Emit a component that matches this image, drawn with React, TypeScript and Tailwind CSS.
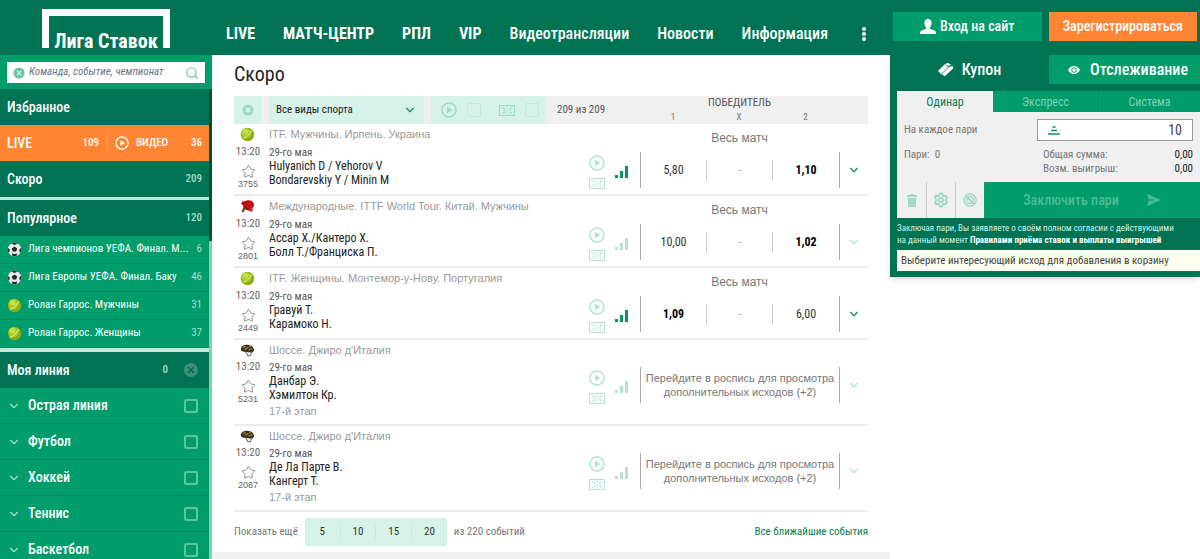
import type { ReactNode } from 'react'
import { ChevronDown, Search, Settings, Star, X } from 'lucide-react'

interface Match {
  id: number
  sport: 'tennis' | 'pingpong' | 'cycling'
  league: string
  players: string[]
  odds?: string[]
  favorite?: number
  stage?: string
  live?: boolean
}

const matches: Match[] = [
  {
    id: 3755,
    sport: 'tennis',
    league: 'ITF. Мужчины. Ирпень. Украина',
    players: ['Hulyanich D / Yehorov V', 'Bondarevskiy Y / Minin M'],
    odds: ['5,80', '-', '1,10'],
    favorite: 2,
    live: true,
  },
  {
    id: 2801,
    sport: 'pingpong',
    league: 'Международные. ITTF World Tour. Китай. Мужчины',
    players: ['Ассар Х./Кантеро Х.', 'Болл Т./Франциска П.'],
    odds: ['10,00', '-', '1,02'],
    favorite: 2,
  },
  {
    id: 2449,
    sport: 'tennis',
    league: 'ITF. Женщины. Монтемор-у-Нову. Португалия',
    players: ['Гравуй Т.', 'Карамоко Н.'],
    odds: ['1,09', '-', '6,00'],
    favorite: 0,
    live: true,
  },
  {
    id: 5231,
    sport: 'cycling',
    league: "Шоссе. Джиро д'Италия",
    players: ['Данбар Э.', 'Хэмилтон Кр.'],
    stage: '17-й этап',
  },
  {
    id: 2087,
    sport: 'cycling',
    league: "Шоссе. Джиро д'Италия",
    players: ['Де Ла Парте В.', 'Кангерт Т.'],
    stage: '17-й этап',
  },
]

const popular = [
  { title: 'Лига чемпионов УЕФА. Финал. М...', count: 6, ball: 'football' },
  { title: 'Лига Европы УЕФА. Финал. Баку', count: 46, ball: 'football' },
  { title: 'Ролан Гаррос. Мужчины', count: 31, ball: 'tennis' },
  { title: 'Ролан Гаррос. Женщины', count: 37, ball: 'tennis' },
]

const sports = ['Острая линия', 'Футбол', 'Хоккей', 'Теннис', 'Баскетбол']

function TennisBall() {
  return (
    <svg viewBox="0 0 16 16" className="size-[15px] shrink-0">
      <circle cx="8" cy="8" r="7.2" fill="#8aae12" />
      <circle cx="7" cy="6.500" r="5.500" fill="#a9cb25" />
      <circle cx="6" cy="5" r="3" fill="#c6e04e" />
      <path d="M3 12c3-.5 7.500-4 9.500-8.500" fill="none" stroke="#eef6b8" strokeWidth="1" />
    </svg>
  )
}

function Football() {
  return (
    <svg viewBox="0 0 16 16" className="size-[15px] shrink-0">
      <circle cx="8" cy="8" r="7.2" fill="#e9ecec" />
      <path
        d="M8 4.800l2.900 2.100-1.100 3.300H6.200L5.100 6.900zM4.500 1.700l3.500-.9 3.500.9L8 3.200zM1 6.500l1.800 1.300-.2 3L1.500 11A7 7 0 0 1 1 6.500zM15 6.500l-1.800 1.300.2 3 1.100.2a7 7 0 0 0 .5-4.500zM5.200 12.300l2.800.5 2.800-.5-.6 2.400a7 7 0 0 1-4.400 0z"
        fill="#232a28"
      />
    </svg>
  )
}

function Paddle() {
  return (
    <svg viewBox="0 0 16 16" className="size-[15px] shrink-0">
      <path d="M5 9.500l-2 3.500" stroke="#7c3a26" strokeWidth="2.400" strokeLinecap="round" />
      <ellipse cx="9" cy="6.200" rx="6" ry="5" fill="#c01218" />
      <path d="M4 8c2 3 6 4.500 8.500 3" stroke="#7d0c10" strokeWidth="1.500" fill="none" />
      <circle cx="11.500" cy="11.500" r="2.200" fill="#d8232a" />
      <circle cx="3.500" cy="4.500" r="2" fill="#b01015" />
    </svg>
  )
}

function Helmet() {
  return (
    <svg viewBox="0 0 16 16" className="size-[15px] shrink-0">
      <path d="M1 5.500C1.500 2.800 5 1.500 9 2c3.500.5 6 2.500 6 6l-2 2.500L3 9C1.500 8.500 1 7.500 1 5.500z" fill="#33301d" />
      <path d="M3 5l3-1.500M5 7l4-2.500M9 7.500l4-1.500M9.500 3.500l2 .8" stroke="#a98f2c" strokeWidth="1.200" />
      <path d="M6 9.500l2.500 4H11l1.500-4" fill="none" stroke="#777" strokeWidth="1.200" />
    </svg>
  )
}

function SportIcon({ sport }: { sport: Match['sport'] }) {
  if (sport === 'tennis') return <TennisBall />
  if (sport === 'pingpong') return <Paddle />
  return <Helmet />
}

function PlayCircle({ className }: { className: string }) {
  return (
    <svg viewBox="0 0 16 16" className={className}>
      <circle cx="8" cy="8" r="7" fill="none" stroke="currentColor" strokeWidth="1.500" />
      <path d="M6 4.800v6.400L11.400 8z" fill="currentColor" />
    </svg>
  )
}

function Scoreboard() {
  return (
    <svg viewBox="0 0 16 11" className="h-[11px] w-4" fill="none" stroke="currentColor">
      <rect x=".5" y=".5" width="15" height="10" />
      <path d="M2.500 3H5l1 1.200-1 1.300 1 1.200L5 8H2.500M13.500 3H11v5h2.500" />
      <path d="M8 1.500v8" strokeDasharray="2 1" />
    </svg>
  )
}

function Signal({ on }: { on?: boolean }) {
  return (
    <svg viewBox="0 0 14 12" className={on ? 'h-3 w-3.5 text-[#0b9162]' : 'h-3 w-3.5 text-[#b5e2d2]'}>
      <path d="M0 9h3v3H0zM5 5h3v7H5zM10 0h3v12h-3z" fill="currentColor" />
    </svg>
  )
}

function RoundCross({ className }: { className: string }) {
  return (
    <svg viewBox="0 0 14 14" className={className}>
      <circle cx="7" cy="7" r="6.500" fill="currentColor" />
      <path d="M4.500 4.500l5 5M9.500 4.500l-5 5" stroke="#fff" strokeOpacity=".7" strokeWidth="1.600" />
    </svg>
  )
}

function Header() {
  return (
    <header className="flex h-[55px] shrink-0 bg-[#007353] text-white">
      <a href="#" className="flex w-[212px] shrink-0 items-end justify-center pb-[7px]">
        <span className="flex h-[39px] w-32 items-end justify-center border-x-[7px] border-t-[7px] border-white text-[20px] leading-3.5 font-bold">
          Лига Ставок
        </span>
      </a>
      <nav className="flex min-w-0 flex-1 items-center gap-7 pt-3 pr-6 pl-3.5 text-[16px] whitespace-nowrap">
        <a href="#" className="font-bold">LIVE</a>
        <a href="#" className="font-bold">МАТЧ-ЦЕНТР</a>
        <a href="#" className="font-bold">РПЛ</a>
        <a href="#" className="font-bold">VIP</a>
        <a href="#" className="font-medium">Видеотрансляции</a>
        <a href="#" className="font-medium">Новости</a>
        <a href="#" className="font-medium">Информация</a>
        <button aria-label="Ещё" className="ml-auto">
          <svg viewBox="0 0 4 14" className="h-3.5 w-1" fill="currentColor">
            <circle cx="2" cy="2" r="2" />
            <circle cx="2" cy="7" r="2" />
            <circle cx="2" cy="12" r="2" />
          </svg>
        </button>
      </nav>
      <div className="flex w-[310px] shrink-0 gap-[7px] px-[3px] pt-3 text-[14px] font-medium whitespace-nowrap">
        <button className="flex h-[29px] min-w-0 flex-1 items-center justify-center gap-1 bg-[#009d6b]">
          <svg viewBox="0 0 16 15" className="h-[15px] w-4" fill="currentColor">
            <path d="M8 0c2.300 0 3.600 1.600 3.600 4 0 2-.8 3.600-1.800 4.500v1.300l4.700 1.700c1 .4 1.500 1.300 1.500 3.500H0c0-2.200.5-3.100 1.500-3.500l4.700-1.700V8.500C5.200 7.600 4.400 6 4.400 4 4.400 1.600 5.700 0 8 0z" />
          </svg>
          Вход на сайт
        </button>
        <button className="h-[29px] min-w-0 flex-1 bg-[#ff8533]">Зарегистрироваться</button>
      </div>
    </header>
  )
}

function MenuHeading({ title, count, children }: { title: string; count?: number; children?: ReactNode }) {
  return (
    <div className="flex h-9 items-center bg-[#007353] px-[7px] text-[14px] font-medium">
      <a href="#" className="flex-1">{title}</a>
      {count !== undefined && <span className="text-[11px] text-[#a8dcca]">{count}</span>}
      {children}
    </div>
  )
}

function Sidebar() {
  return (
    <aside className="flex w-[212px] shrink-0 flex-col bg-[#009d6b] text-white">
      <div className="px-[7px] pt-[7px] pb-1.5">
        <div className="flex h-[21px] items-center gap-1 bg-white px-1.5 text-[#6cc3a5]">
          <button aria-label="Очистить">
            <RoundCross className="size-3 text-[#6cc3a5]" />
          </button>
          <input
            aria-label="Поиск"
            placeholder="Команда, событие, чемпионат"
            className="min-w-0 flex-1 text-[11px] text-gray-700 italic outline-none placeholder:text-gray-500"
          />
          <Search className="size-3.5" strokeWidth={2} />
        </div>
      </div>
      <div className="flex min-h-0 flex-1">
        <div className="min-w-0 flex-1 overflow-hidden">
          <MenuHeading title="Избранное" />
          <div className="flex h-9 items-center bg-[#ff8533] px-[7px] text-[11px] font-medium">
            <a href="#" className="flex-1 text-[14px]">LIVE</a>
            <span>109</span>
            <a href="#" className="ml-2 flex h-5 w-[95px] items-center border-l border-[#ffa970] pl-[7px]">
              <PlayCircle className="mr-[7px] size-3.5" />
              <span className="flex-1">ВИДЕО</span>
              <span>36</span>
            </a>
          </div>
          <MenuHeading title="Скоро" count={209} />
          <div className="h-[3px] bg-[#bfeadb]" />
          <MenuHeading title="Популярное" count={120} />
          <ul>
            {popular.map((item) => (
              <li key={item.title} className="flex h-7 items-center border-b border-[#008a5e] px-[7px] text-[11px]">
                {item.ball === 'football' ? <Football /> : <TennisBall />}
                <a href="#" className="ml-1.5 min-w-0 flex-1 truncate">{item.title}</a>
                <span className="text-[#a8dcca]">{item.count}</span>
              </li>
            ))}
          </ul>
          <div className="h-1 bg-[#bfeadb]" />
          <MenuHeading title="Моя линия" count={0}>
            <button aria-label="Сбросить" className="mr-1 ml-4 flex size-3.5 items-center justify-center rounded-full bg-[#3d8f77] text-[#006346]">
              <X className="size-2.5" strokeWidth={3} />
            </button>
          </MenuHeading>
          <ul>
            {sports.map((sport) => (
              <li key={sport} className="border-b border-[#008a5e]">
                <label className="flex h-[35px] items-center px-[7px] text-[14px] font-medium">
                  <ChevronDown className="size-3.5 text-[#a8dcca]" />
                  <span className="ml-[7px] flex-1">{sport}</span>
                  <input type="checkbox" className="mr-1 size-3.5 appearance-none rounded-xs border-2 border-[#5cc4a0]" />
                </label>
              </li>
            ))}
          </ul>
        </div>
        <div className="w-[3px] bg-[#80d0b6]">
          <div className="h-[152px] bg-[#004f39]" />
        </div>
      </div>
    </aside>
  )
}

function oddClass(odd: string, isFavorite: boolean) {
  if (isFavorite) return 'flex-1 font-bold text-black'
  return odd === '-' ? 'flex-1 text-[#aaa]' : 'flex-1'
}

function MatchRows({ match }: { match: Match }) {
  return (
    <tbody className="border-b-2 border-[#ececec] align-top">
      <tr className="font-['Liberation_Sans',sans-serif] text-[#999]">
        <td className="h-5 pt-[3px] pl-1.5">
          <SportIcon sport={match.sport} />
        </td>
        <td colSpan={2} className="pt-1 text-[11px] leading-3">{match.league}</td>
        <td colSpan={3} className="text-center text-[12px] leading-3 text-[#777]">
          {match.odds && <div className="pt-2">Весь матч</div>}
        </td>
        <td />
      </tr>
      <tr>
        <td className="pr-[7px] text-center text-[#666]">
          <div className="pt-0.5 text-[11px] leading-3">13:20</div>
          <button aria-label="В избранное" className="block w-full pt-1.5">
            <Star className="mx-auto size-[15px] text-[#888]" strokeWidth={1.5} />
          </button>
          <div className="font-['Liberation_Sans',sans-serif] text-[9px] leading-2.5">{match.id}</div>
        </td>
        <td className="pb-[7px] text-[#222]">
          <div className="pt-0.5 text-[11px] leading-[13px] text-[#555]">29-го мая</div>
          {match.players.map((player) => (
            <div key={player} className="text-[12px] leading-3.5">{player}</div>
          ))}
          {match.stage && (
            <div className="pt-[3px] font-['Liberation_Sans',sans-serif] text-[11px] leading-3 text-[#999]">{match.stage}</div>
          )}
        </td>
        <td className="pt-[11px]">
          <div className="flex items-center gap-2.5 text-[#b5e2d2]">
            <div className="flex flex-col gap-[7px]">
              <PlayCircle className="size-4" />
              <Scoreboard />
            </div>
            <Signal on={match.live} />
          </div>
        </td>
        {match.odds ? (
          match.odds.map((odd, i) => (
            <td key={i} className="pt-2">
              <button
                className={
                  i === 0
                    ? 'flex h-9 w-full items-center border-l border-[#aaa] text-[12px] text-[#333]'
                    : 'flex h-9 w-full items-center text-[12px] text-[#333]'
                }
              >
                {i > 0 && <span className="h-5 border-l border-[#ccc]" />}
                <span className={oddClass(odd, i === match.favorite)}>{odd}</span>
              </button>
            </td>
          ))
        ) : (
          <td colSpan={3} className="pt-2">
            <a
              href="#"
              className="flex h-9 items-center justify-center border-l border-[#aaa] px-1 text-center font-['Liberation_Sans',sans-serif] text-[11px] leading-3.5 text-[#777]"
            >
              Перейдите в роспись для просмотра дополнительных исходов (+2)
            </a>
          </td>
        )}
        <td className="pt-2">
          <button aria-label="Роспись" className="flex h-9 w-full items-center border-l border-[#aaa] pl-[7px]">
            <ChevronDown className={match.live ? 'size-3.5 text-[#0b9162]' : 'size-3.5 text-[#b5e2d2]'} />
          </button>
        </td>
      </tr>
    </tbody>
  )
}

function Events() {
  return (
    <main className="min-w-0 flex-1 bg-[#f0f0f0]">
      <div className="bg-white px-[22px] pb-1.5">
        <h1 className="h-[41px] pt-[5px] text-[20px] leading-7 text-[#222]">Скоро</h1>
        <table className="w-full table-fixed border-collapse">
          <colgroup>
            <col className="w-[35px]" />
            <col />
            <col className="w-[51px]" />
            <col className="w-[66px]" />
            <col className="w-[66px]" />
            <col className="w-[67px]" />
            <col className="w-[29px]" />
          </colgroup>
          <thead className="bg-[#f0f0f0] text-[#555]">
            <tr className="h-3.5">
              <th colSpan={3} rowSpan={2} className="p-0 font-normal">
                <div className="flex h-7 items-center gap-[7px] text-[11px]">
                  <button aria-label="Сбросить фильтр" className="flex h-full w-7 items-center justify-center bg-[#d6f2e9]">
                    <RoundCross className="size-3 text-[#a0dac6]" />
                  </button>
                  <div className="relative h-full w-[155px]">
                    <select
                      aria-label="Вид спорта"
                      className="h-full w-full appearance-none bg-[#d6f2e9] pl-[7px] text-[#222]"
                    >
                      <option>Все виды спорта</option>
                    </select>
                    <ChevronDown className="pointer-events-none absolute top-[7px] right-[7px] size-3.5 text-[#0b9162]" />
                  </div>
                  <div className="flex h-full w-[115px] items-center gap-2.5 bg-[#d6f2e9] pl-2.5 text-[#a0dac6]">
                    <PlayCircle className="size-4" />
                    <input type="checkbox" aria-label="С видео" className="size-3.5 appearance-none rounded-xs border border-[#c4e8dc]" />
                    <span className="ml-2">
                      <Scoreboard />
                    </span>
                    <input type="checkbox" aria-label="С табло" className="size-3.5 appearance-none rounded-xs border border-[#c4e8dc]" />
                  </div>
                  <span className="ml-1">209 из 209</span>
                </div>
              </th>
              <th colSpan={3} className="p-0 text-[11px] leading-3 font-normal">ПОБЕДИТЕЛЬ</th>
              <th rowSpan={2} />
            </tr>
            <tr className="h-3.5 text-[9px] leading-3 text-[#777]">
              <th className="p-0 font-normal">1</th>
              <th className="p-0 font-normal">X</th>
              <th className="p-0 font-normal">2</th>
            </tr>
          </thead>
          {matches.map((match) => (
            <MatchRows key={match.id} match={match} />
          ))}
        </table>
        <div className="flex items-center pt-1.5 text-[11px] text-[#777]">
          <span>Показать ещё</span>
          <div className="mx-[7px] flex h-7 w-[142px] items-center divide-x divide-[#c4e8dc] bg-[#d6f2e9] text-[#333]">
            <button className="flex-1 leading-3">5</button>
            <button className="flex-1 leading-3">10</button>
            <button className="flex-1 leading-3">15</button>
            <button className="flex-1 leading-3">20</button>
          </div>
          <span>из 220 событий</span>
          <a href="#" className="ml-auto text-[#0b7d57]">Все ближайшие события</a>
        </div>
      </div>
    </main>
  )
}

function Coupon() {
  return (
    <aside className="w-[310px] shrink-0 bg-white">
      <div className="bg-[#007353] pb-1.5 text-white shadow-md">
        <div className="flex h-[29px] text-[16px] font-medium">
          <button className="flex w-[159px] items-center justify-center gap-2">
            <svg viewBox="0 0 16 14" className="h-3.5 w-4">
              <path d="M0 8l7-7 4 4-7 7z" fill="#fff" />
              <path d="M3 11.500l8-8 3.500-1L16 5 7 13.500z" fill="#fff" stroke="#007353" strokeWidth=".8" />
              <path d="M7 1l3-1 3 1.500L10.500 3z" fill="#fff" />
            </svg>
            Купон
          </button>
          <button className="flex min-w-0 flex-1 items-center justify-end gap-2.5 bg-[#009d6b] pr-3">
            <svg viewBox="0 0 12 8" className="h-2 w-3">
              <path d="M0 4C1.500 1.300 3.600 0 6 0s4.500 1.300 6 4c-1.500 2.700-3.600 4-6 4S1.500 6.700 0 4z" fill="#fff" />
              <circle cx="6" cy="4" r="2.300" fill="none" stroke="#009d6b" />
            </svg>
            Отслеживание
          </button>
        </div>
        <div className="pt-[7px] pl-[7px]">
          <div className="flex h-[21px] text-[12px] text-[#7fd0b5]">
            <button className="flex-1 bg-[#f0f0f0] text-[#0b7d57]">Одинар</button>
            <button className="w-[106px] border-r border-[#008a5e] bg-[#009d6b]">Экспресс</button>
            <button className="w-[101px] bg-[#009d6b]">Система</button>
          </div>
          <div className="bg-[#f0f0f0] px-[7px] pt-[7px] text-[11px] text-[#777]">
            <label className="flex items-center">
              <span className="flex-1">На каждое пари</span>
              <span className="flex h-[22px] w-[156px] items-center border border-[#999] bg-white px-2.5">
                <svg viewBox="0 0 12 10" className="h-2.5 w-3" fill="none" stroke="#0b9162" strokeWidth="1.500">
                  <path d="M4.500 2h3M3 5.500h6M0 9h12" />
                </svg>
                <input defaultValue="10" className="min-w-0 flex-1 text-right text-[14px] text-[#444] outline-none" />
              </span>
            </label>
            <div className="flex justify-between pt-[7px] pb-1.5 leading-3.5">
              <span>Пари: &nbsp;0</span>
              <dl className="grid w-[150px] grid-cols-[1fr_auto]">
                <dt>Общая сумма:</dt>
                <dd className="text-[#222]">0,00</dd>
                <dt>Возм. выигрыш:</dt>
                <dd className="text-[#222]">0,00</dd>
              </dl>
            </div>
          </div>
          <div className="flex h-9 bg-[#f0f0f0] text-[#a0dac6]">
            <button aria-label="Удалить" className="flex w-[29px] items-center justify-center">
              <svg viewBox="0 0 10 13" className="h-[13px] w-2.5" fill="currentColor">
                <path d="M3 0h4v1h3v2H0V1h3zM1 4h8v9H1z" />
              </svg>
            </button>
            <button aria-label="Настройки" className="flex w-[29px] items-center justify-center border-l border-[#ccc]">
              <Settings className="size-4" strokeWidth={3} />
            </button>
            <button aria-label="Отменить" className="flex w-[29px] items-center justify-center border-l border-[#ccc]">
              <svg viewBox="0 0 14 14" className="size-3.5" fill="none" stroke="currentColor">
                <circle cx="7" cy="7" r="6" strokeWidth="1.500" />
                <circle cx="7" cy="7" r="3.500" strokeWidth="1.500" />
                <path d="M3 3l8 8" strokeWidth="2" />
              </svg>
            </button>
            <button className="flex flex-1 items-center justify-center gap-7 bg-[#009d6b] text-[14px] font-medium text-[#4dbb97]">
              Заключить пари
              <svg viewBox="0 0 14 12" className="h-3 w-3.5" fill="currentColor">
                <path d="M0 0l14 6-14 6 1.500-5L9 6 1.500 5z" />
              </svg>
            </button>
          </div>
          <p className="py-1 text-[9px] leading-3 text-[#d5f2e8]">
            Заключая пари, Вы заявляете о своём полном согласии с действующими
            <br />
            на данный момент{' '}
            <a href="#" className="font-bold text-white">Правилами приёма ставок и выплаты выигрышей</a>
          </p>
          <p className="bg-[#fffff0] px-1 text-[11px] leading-[21px] text-[#444]">
            Выберите интересующий исход для добавления в корзину
          </p>
        </div>
      </div>
    </aside>
  )
}

export default function App() {
  return (
    <div className="flex h-screen flex-col overflow-hidden bg-white font-['Roboto_Condensed','Liberation_Sans_Narrow','Roboto',sans-serif]">
      <Header />
      <div className="flex min-h-0 flex-1">
        <Sidebar />
        <Events />
        <Coupon />
      </div>
    </div>
  )
}
